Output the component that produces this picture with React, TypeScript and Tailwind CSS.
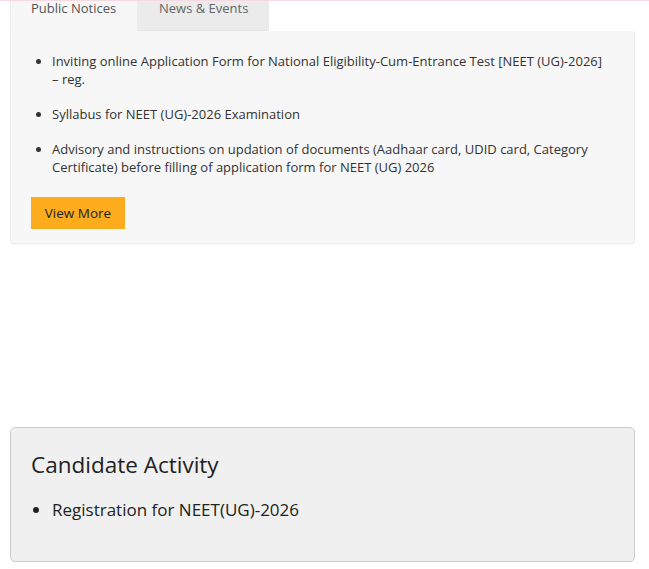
import React, { useState } from "react";

type Notice = {
  id: number;
  title: string;
};

const notices: Notice[] = [
  {
    id: 1,
    title:
      "Inviting online Application Form for National Eligibility-Cum-Entrance Test [NEET (UG)-2026] – reg.",
  },
  { id: 2, title: "Syllabus for NEET (UG)-2026 Examination" },
  {
    id: 3,
    title:
      "Advisory and instructions on updation of documents (Aadhaar card, UDID card, Category Certificate) before filling of application form for NEET (UG) 2026",
  },
];

const tabs = ["Public Notices", "News & Events"];

export default function App() {
  const [activeTab, setActiveTab] = useState(0);

  return (
    <div
      className="min-h-[569px] w-full bg-white border-t border-[#f6d9e1] text-[#333]"
      style={{ fontFamily: '"Open Sans", "Liberation Sans", sans-serif' }}
    >
      <div className="px-[10px] pr-[14px]">
        {/* tab strip */}
        <div className="flex">
          {tabs.map((tab, i) => (
            <div
              key={tab}
              role="tab"
              onClick={() => setActiveTab(i)}
              className={
                i === activeTab
                  ? "h-[30px] w-[128px] cursor-pointer border-l border-r border-[#ececec] bg-[#f7f7f7] pl-[20px] text-[13px] leading-[15px] text-[#555]"
                  : "h-[30px] w-[131px] cursor-pointer border-b border-[#e6e6e6] bg-[#ebebeb] pl-[21px] text-[13px] leading-[15px] text-[#666]"
              }
            >
              {tab}
            </div>
          ))}
        </div>

        {/* notices panel */}
        <div className="rounded-b-[4px] border border-t-0 border-[#ececec] bg-[#f7f7f7] px-[20px] pt-[21px] pb-[14px] shadow-[0_1px_1px_rgba(0,0,0,0.04)]">
          <ul className="list-disc pl-[21px] text-[13px] leading-[18px]">
            {notices.map((n) => (
              <li key={n.id} className="mb-[17px] pr-[10px]">
                {n.title}
              </li>
            ))}
          </ul>
          <button className="mt-[4px] h-[32px] w-[94px] bg-[#fcac1c] text-[13.5px] text-[#222]">
            View More
          </button>
        </div>

        <div className="h-[183px]" />

        {/* candidate activity */}
        <div className="h-[135px] rounded-[5px] border border-[#cccccc] bg-[#f0f0f0] px-[20px] pt-[22px]">
          <h2 className="text-[22.5px] leading-[30px] text-[#222]">
            Candidate Activity
          </h2>
          <ul className="mt-[18px] list-disc pl-[21px] text-[17px] leading-[24px] text-[#222]">
            <li>Registration for NEET(UG)-2026</li>
          </ul>
        </div>
      </div>
    </div>
  );
}
